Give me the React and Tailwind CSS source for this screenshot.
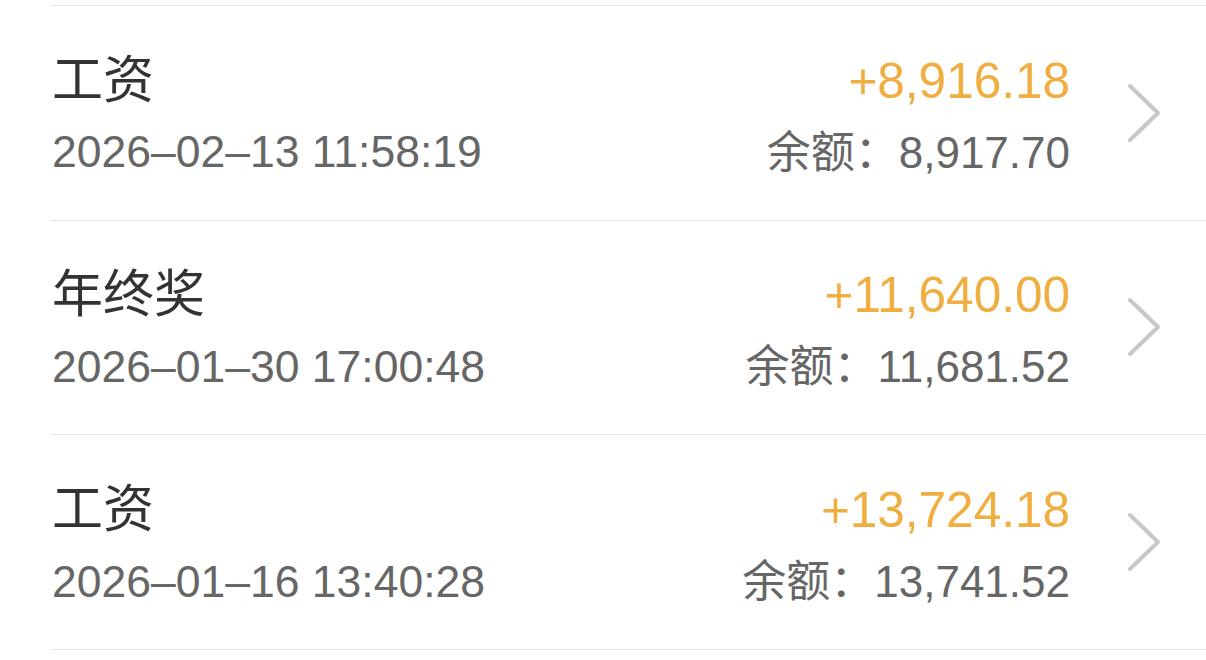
const FONT = { fontFamily: "'Liberation Sans', 'Noto Sans CJK SC', sans-serif" }

const ROWS = [
  { title: '工资', time: '2026–02–13 11:58:19', amount: '+8,916.18', balance: '8,917.70' },
  { title: '年终奖', time: '2026–01–30 17:00:48', amount: '+11,640.00', balance: '11,681.52' },
  { title: '工资', time: '2026–01–16 13:40:28', amount: '+13,724.18', balance: '13,741.52' },
]

function Chevron() {
  return (
    <svg width="34" height="60" viewBox="0 0 34 60" fill="none" className="shrink-0">
      <path d="M3 3 L31 30 L3 57" stroke="#c7c7cc" strokeWidth="4" strokeLinecap="round" strokeLinejoin="round" />
    </svg>
  )
}

export default function App() {
  return (
    <div className="w-[1206px] h-[660px] bg-white overflow-hidden" style={FONT}>
      <div className="ml-[51px] mt-[5px] border-t border-[#e5e5e5]">
        {ROWS.map((r, i) => (
          <div key={i} className="h-[214.67px] border-b border-[#e5e5e5] flex items-center pr-[45px]">
            <div className="flex-1 flex flex-col pl-[1px] pt-[8px]">
              <div className="flex justify-between items-center h-[72px]">
                <span className="text-[51px] text-[#333333]">{r.title}</span>
                <span className="text-[49.5px] text-[#f0ae40]">{r.amount}</span>
              </div>
              <div className="flex justify-between items-center h-[72px]">
                <span className="text-[44.5px] text-[#666666]">{r.time}</span>
                <span className="text-[44px] text-[#666666]">余额：{r.balance}</span>
              </div>
            </div>
            <div className="ml-[57px]">
              <Chevron />
            </div>
          </div>
        ))}
      </div>
    </div>
  )
}
